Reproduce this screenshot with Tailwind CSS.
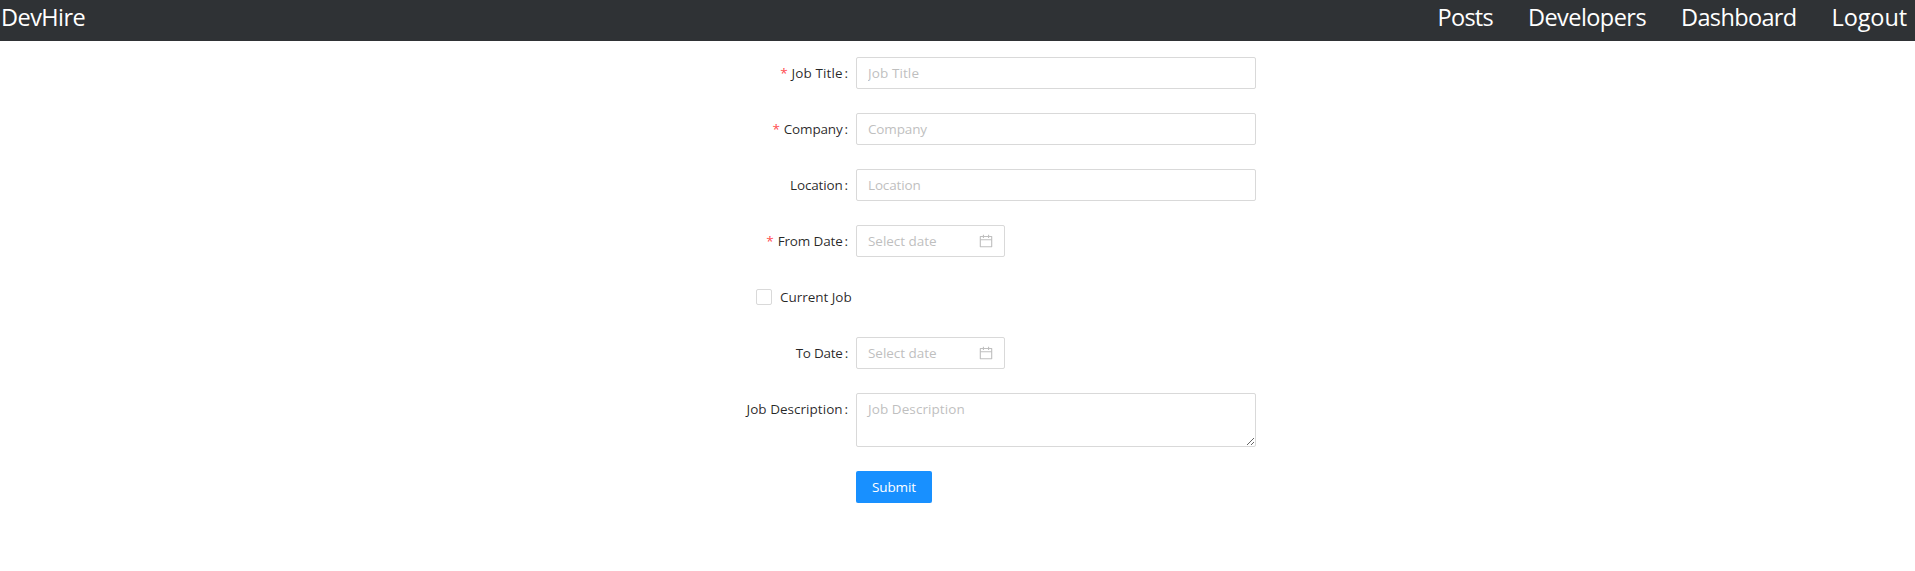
<!DOCTYPE html>
<html lang="en">
<head>
<meta charset="utf-8">
<title>DevHire</title>
<script src="https://cdn.jsdelivr.net/npm/@tailwindcss/browser@4"></script>
</head>
<body class="bg-white font-['Open_Sans','Noto_Sans',sans-serif] text-[13.5px] leading-[22px] tracking-[-0.15px] text-black/85">
<header class="flex h-[41px] justify-between bg-[#2f3235] pl-px pr-[8px] text-[23.5px] leading-[34px] tracking-[-0.65px] text-white">
  <a class="tracking-[-0.55px]">DevHire</a>
  <nav class="flex gap-[35px]"><a class="tracking-[-0.75px]">Posts</a><a class="tracking-[-0.55px]">Developers</a><a>Dashboard</a><a class="tracking-[-0.1px]">Logout</a></nav>
</header>
<form class="ml-[656px] mt-4 flex w-[600px] flex-col gap-6">
  <div class="flex h-8"><label class="w-[200px] pr-2 pt-[5px] text-right"><span class="mr-1 text-[#ff4d4f]">*</span><span class="tracking-[0.1px]">Job Title</span><span class="ml-[2px]">:</span></label><input class="w-[400px] rounded-[2px] border border-[#d9d9d9] px-[11px] tracking-[0.1px] placeholder:text-[#bfbfbf]" placeholder="Job Title"></div>
  <div class="flex h-8"><label class="w-[200px] pr-2 pt-[5px] text-right"><span class="mr-1 text-[#ff4d4f]">*</span>Company<span class="ml-[2px]">:</span></label><input class="w-[400px] rounded-[2px] border border-[#d9d9d9] px-[11px] placeholder:text-[#bfbfbf]" placeholder="Company"></div>
  <div class="flex h-8"><label class="w-[200px] pr-2 pt-[5px] text-right">Location<span class="ml-[2px]">:</span></label><input class="w-[400px] rounded-[2px] border border-[#d9d9d9] px-[11px] placeholder:text-[#bfbfbf]" placeholder="Location"></div>
  <div class="flex h-8"><label class="w-[200px] pr-2 pt-[5px] text-right"><span class="mr-1 text-[#ff4d4f]">*</span>From Date<span class="ml-[2px]">:</span></label>
    <div class="flex w-[149px] items-center rounded-[2px] border border-[#d9d9d9] px-[11px]"><input class="min-w-0 flex-1 tracking-[-0.03px] placeholder:text-[#bfbfbf]" placeholder="Select date"><svg class="size-[14px] text-black/25" viewBox="64 64 896 896" fill="currentColor"><path d="M880 184H712v-64c0-4.400-3.600-8-8-8h-56c-4.400 0-8 3.600-8 8v64H384v-64c0-4.400-3.600-8-8-8h-56c-4.400 0-8 3.600-8 8v64H144c-17.700 0-32 14.300-32 32v664c0 17.700 14.300 32 32 32h736c17.700 0 32-14.300 32-32V216c0-17.700-14.300-32-32-32zm-40 656H184V460h656v380zM184 392V256h128v48c0 4.400 3.600 8 8 8h56c4.400 0 8-3.600 8-8v-48h256v48c0 4.400 3.600 8 8 8h56c4.400 0 8-3.600 8-8v-48h128v136H184z"/></svg></div></div>
  <label class="ml-[100px] flex h-8 items-center"><input type="checkbox" class="size-4 appearance-none rounded-[2px] border border-[#d9d9d9] bg-white"><span class="pl-2 tracking-[-0.03px]">Current Job</span></label>
  <div class="flex h-8"><label class="w-[200px] pr-2 pt-[5px] text-right tracking-[-0.25px]">To Date<span class="ml-[2px]">:</span></label>
    <div class="flex w-[149px] items-center rounded-[2px] border border-[#d9d9d9] px-[11px]"><input class="min-w-0 flex-1 tracking-[-0.03px] placeholder:text-[#bfbfbf]" placeholder="Select date"><svg class="size-[14px] text-black/25" viewBox="64 64 896 896" fill="currentColor"><path d="M880 184H712v-64c0-4.400-3.600-8-8-8h-56c-4.400 0-8 3.600-8 8v64H384v-64c0-4.400-3.600-8-8-8h-56c-4.400 0-8 3.600-8 8v64H144c-17.700 0-32 14.300-32 32v664c0 17.700 14.300 32 32 32h736c17.700 0 32-14.300 32-32V216c0-17.700-14.300-32-32-32zm-40 656H184V460h656v380zM184 392V256h128v48c0 4.400 3.600 8 8 8h56c4.400 0 8-3.600 8-8v-48h256v48c0 4.400 3.600 8 8 8h56c4.400 0 8-3.600 8-8v-48h128v136H184z"/></svg></div></div>
  <div class="flex h-[54px]"><label class="w-[200px] pr-2 pt-[5px] text-right"><span class="tracking-[0.03px]">Job Description</span><span class="ml-[2px]">:</span></label><textarea class="h-[54px] w-[400px] rounded-[2px] border border-[#d9d9d9] px-[11px] py-1 tracking-[0.08px] placeholder:text-[#bfbfbf]" placeholder="Job Description"></textarea></div>
  <button type="button" class="ml-[200px] h-8 w-[76px] rounded-[2px] bg-[#1890ff] text-white tracking-[-0.1px] shadow-[0_2px_0_rgba(0,0,0,0.045)]">Submit</button>
</form>
</body>
</html>
